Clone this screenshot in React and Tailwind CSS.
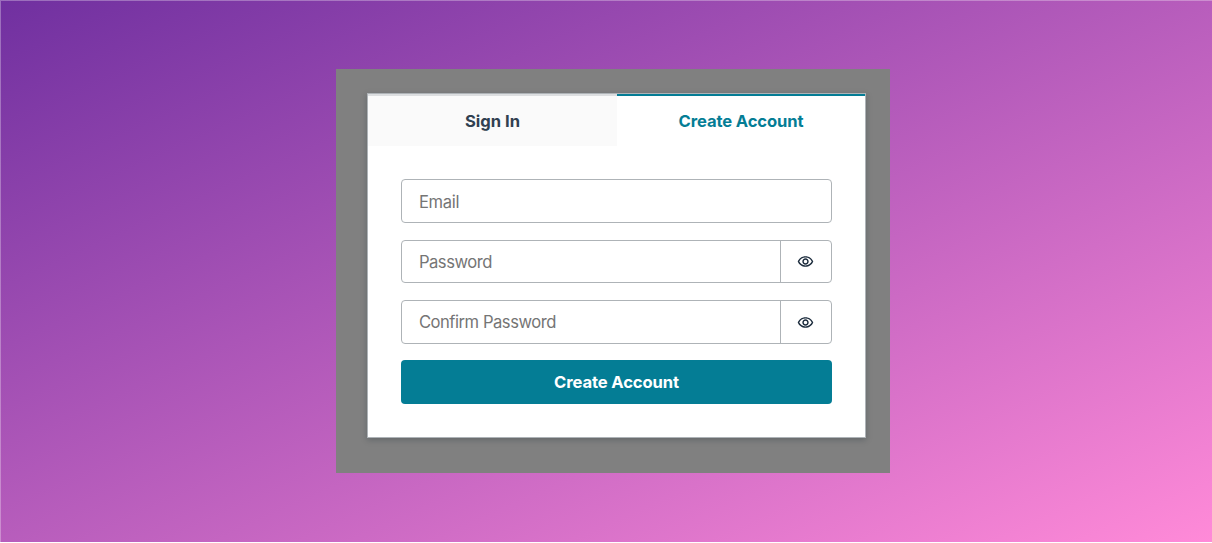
import { MdOutlineRemoveRedEye } from "react-icons/md";

function PasswordField({ placeholder }) {
  return (
    <div className="flex h-[43.6px] rounded-[4px] border border-[#aeb3b7]">
      <input
        type="password"
        placeholder={placeholder}
        className="min-w-0 flex-1 border-r border-[#aeb3b7] pt-px pr-[17px] pl-[17.4px] text-[16.6px] tracking-[-0.47px] text-[#304050] outline-none placeholder:text-[#757575]"
      />
      <button type="button" aria-label="Show password" className="flex w-[50px] items-center justify-center pt-px text-[#1b2b3c]">
        <MdOutlineRemoveRedEye className="size-[17px]" />
      </button>
    </div>
  );
}

export default function App() {
  return (
    <div className="h-[543px] w-full bg-white pb-px font-['Inter',sans-serif]">
      <div className="flex h-full items-start justify-center border-t border-l border-white/30 bg-linear-[to_right_bottom,#7030a0,#ff8ad8] bg-origin-border pt-[68px] pl-[12px]">
        <main className="h-[404px] w-[554px] bg-[#808080] pt-[24px] pl-[31px]">
          <div className="h-[345px] w-[499px] border border-[#aeb3b7] bg-white shadow-[0_2px_6px_rgba(13,26,38,0.25)]">
            <div className="flex h-[52px] text-[16.6px] font-bold">
              <button type="button" className="w-[249px] border-t-2 border-[#dcdee0] bg-[#fafafa] pl-px text-[#304050]">
                Sign In
              </button>
              <button type="button" className="flex-1 border-t-2 border-[#047d95] pl-px tracking-[-0.12px] text-[#047d95]">
                Create Account
              </button>
            </div>
            <form className="flex flex-col gap-[16.7px] px-[33px] pt-[33.4px]">
              <input
                type="email"
                placeholder="Email"
                className="h-[43.6px] rounded-[4px] border border-[#aeb3b7] pt-px pr-[17px] pl-[17.4px] text-[16.6px] tracking-[-0.3px] text-[#304050] outline-none placeholder:text-[#757575]"
              />
              <PasswordField placeholder="Password" />
              <PasswordField placeholder="Confirm Password" />
              <button type="button" className="h-[43.8px] rounded-[4px] bg-[#047d95] pt-px pl-px text-[16.6px] font-bold tracking-[-0.12px] text-white">
                Create Account
              </button>
            </form>
          </div>
        </main>
      </div>
    </div>
  );
}
